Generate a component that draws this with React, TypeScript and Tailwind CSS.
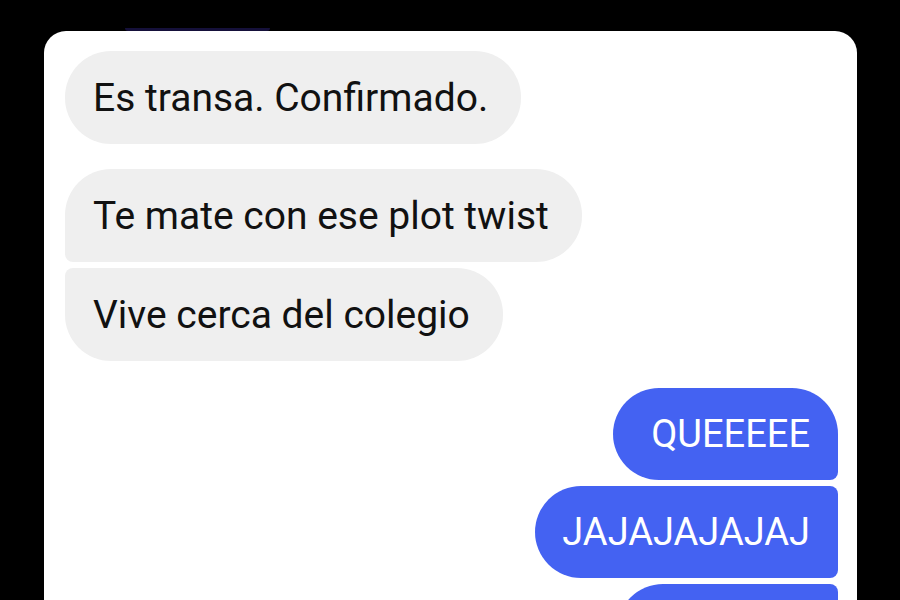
import React from 'react';

type Msg = { text: string; shape: string; width?: string };

const incoming: Msg[][] = [
  [{ text: 'Es transa. Confirmado.', shape: 'rounded-[46px]' }],
  [
    { text: 'Te mate con ese plot twist', shape: 'rounded-t-[46px] rounded-br-[46px] rounded-bl-[8px]' },
    { text: 'Vive cerca del colegio', shape: 'rounded-b-[46px] rounded-tr-[46px] rounded-tl-[8px]' },
  ],
];

const outgoing: Msg[] = [
  { text: 'QUEEEEE', shape: 'rounded-l-[46px] rounded-tr-[46px] rounded-br-[8px]', width: 'w-[225px]' },
  { text: 'JAJAJAJAJAJ', shape: 'rounded-l-[46px] rounded-r-[8px]', width: 'w-[303px]' },
  { text: '', shape: 'rounded-l-[46px] rounded-r-[8px]', width: 'w-[221px]' },
];

const App: React.FC = () => {
  return (
    <div className="w-[900px] h-[600px] overflow-hidden bg-black font-['Roboto','Liberation_Sans',sans-serif]">
      {/* peek of something above the card */}
      <div className="ml-[125px] mt-[28px] w-[145px] h-[3px] rounded-b-full bg-[#15103a]"></div>

      <div className="ml-[44px] w-[813px] h-[600px] bg-white rounded-t-[22px] pt-[20px] pl-[21px] pr-[19px]">
        {/* Incoming */}
        <div className="flex flex-col gap-[25px]">
          {incoming.map((group, gi) => (
            <div key={gi} className="flex flex-col items-start gap-[6px]">
              {group.map((m) => (
                <div
                  key={m.text}
                  className={`h-[93px] flex items-center pl-[28px] pr-[33px] bg-[#efefef] text-[#111111] text-[39px] leading-[46px] whitespace-nowrap ${m.shape}`}
                >
                  {m.text}
                </div>
              ))}
            </div>
          ))}
        </div>

        {/* Outgoing */}
        <div className="mt-[27px] flex flex-col items-end gap-[6px]">
          {outgoing.map((m, i) => (
            <div
              key={i}
              className={`h-[92px] flex items-center justify-end px-[28px] bg-[#4462f2] text-white text-[38px] leading-[46px] whitespace-nowrap ${m.shape} ${m.width ?? ''}`}
            >
              {m.text}
            </div>
          ))}
        </div>
      </div>
    </div>
  );
};

export default App;
